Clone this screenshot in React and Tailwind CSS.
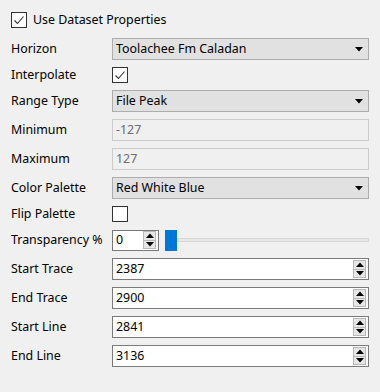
import React from "react";

function Check({ checked }) {
  return (
    <div className="w-4 h-4 shrink-0 border border-[#333333] bg-white flex items-center justify-center">
      {checked && (
        <svg width="14" height="14" viewBox="0 0 14 14">
          <path d="M2.5 7.5 L5.5 10.5 L11.5 3.5" fill="none" stroke="#333333" strokeWidth="1.1" />
        </svg>
      )}
    </div>
  );
}

function DownArrow() {
  return (
    <svg width="8" height="5" viewBox="0 0 8 5">
      <path d="M0 0 H8 L4 4.5 Z" fill="#000" />
    </svg>
  );
}

function UpArrow() {
  return (
    <svg width="8" height="5" viewBox="0 0 8 5">
      <path d="M0 5 H8 L4 0.5 Z" fill="#000" />
    </svg>
  );
}

function Combo({ value }) {
  return (
    <div className="h-[22px] w-full border border-[#adadad] bg-[#e1e1e1] flex items-center pl-[3px] pr-[5px] justify-between">
      <span>{value}</span>
      <DownArrow />
    </div>
  );
}

function Spin() {
  return (
    <div className="flex flex-col h-[18px] w-[13px]">
      <div className="flex-1 border border-[#b9b9b9] bg-[#e6e6e6] flex items-center justify-center">
        <UpArrow />
      </div>
      <div className="flex-1 border border-t-0 border-[#b9b9b9] bg-[#e6e6e6] flex items-center justify-center">
        <DownArrow />
      </div>
    </div>
  );
}

function Field({ value, disabled, spin }) {
  if (disabled) {
    return (
      <div className="h-[22px] w-full border border-[#cccccc] bg-[#f0f0f0] flex items-center pl-[3px] text-[#6d6d6d]">
        {value}
      </div>
    );
  }
  return (
    <div className="h-[22px] w-full border border-[#7a7a7a] bg-white flex items-center pl-[3px] pr-[2px] justify-between">
      <span>{value}</span>
      {spin && <Spin />}
    </div>
  );
}

function Row({ label, children, h = "h-[22px]" }) {
  return (
    <div className={`flex items-center ${h}`}>
      <div className="w-[101px] shrink-0">{label}</div>
      <div className="flex-1 flex items-center">{children}</div>
    </div>
  );
}

export default function App() {
  return (
    <div className="w-[380px] h-[392px] bg-[#f0f0f0] px-[11px] pt-[12px] text-[12.4px] text-black font-['Noto_Sans',sans-serif] leading-none">
      <div className="flex items-center gap-[6px] h-4 mb-[10px]">
        <Check checked />
        <span>Use Dataset Properties</span>
      </div>
      <div className="flex flex-col gap-[7px]">
        <Row label="Horizon">
          <Combo value="Toolachee Fm Caladan" />
        </Row>
        <Row label="Interpolate" h="h-4">
          <Check checked />
        </Row>
        <Row label="Range Type">
          <Combo value="File Peak" />
        </Row>
        <Row label="Minimum">
          <Field value="-127" disabled />
        </Row>
        <Row label="Maximum">
          <Field value="127" disabled />
        </Row>
        <Row label="Color Palette">
          <Combo value="Red White Blue" />
        </Row>
        <Row label="Flip Palette" h="h-4">
          <Check />
        </Row>
        <Row label="Transparency %">
          <div className="w-[47px] h-[21px] border border-[#7a7a7a] bg-white flex items-center pl-[3px] pr-[2px] justify-between">
            <span>0</span>
            <Spin />
          </div>
          <div className="flex-1 flex items-center h-[21px] ml-[6px]">
            <div className="w-[12px] h-[21px] bg-[#0078d7] shrink-0" />
            <div className="flex-1 h-[4px] bg-[#e7e7e7] border border-[#d6d6d6]" />
          </div>
        </Row>
        <Row label="Start Trace">
          <Field value="2387" spin />
        </Row>
        <Row label="End Trace">
          <Field value="2900" spin />
        </Row>
        <Row label="Start Line">
          <Field value="2841" spin />
        </Row>
        <Row label="End Line">
          <Field value="3136" spin />
        </Row>
      </div>
    </div>
  );
}
